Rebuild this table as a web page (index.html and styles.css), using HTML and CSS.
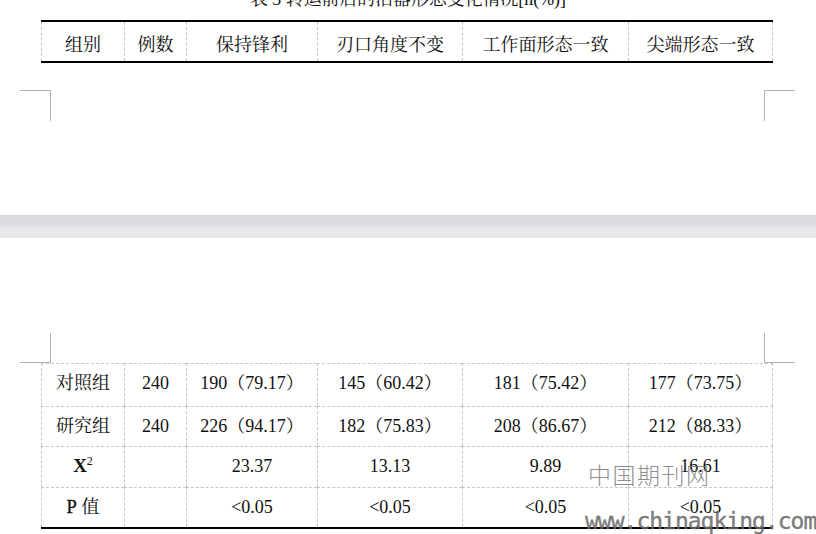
FILE: index.html
```html
<!DOCTYPE html>
<html lang="zh-CN">
<head>
<meta charset="utf-8">
<title>表 3</title>
<link rel="stylesheet" href="styles.css">
</head>
<body>
<main class="doc">
  <section class="sheet sheet-top">
    <p class="caption">表 3 转运前后的治器形态变化情况[n(%)]</p>
    <div class="grid grid-head">
      <div class="cell">组别</div>
      <div class="cell">例数</div>
      <div class="cell">保持锋利</div>
      <div class="cell">刃口角度不变</div>
      <div class="cell">工作面形态一致</div>
      <div class="cell">尖端形态一致</div>
    </div>
    <div class="marks marks-top">
      <span class="mark mark-tl"></span>
      <span class="mark mark-tr"></span>
    </div>
  </section>
  <div class="gutter"></div>
  <section class="sheet sheet-bottom">
    <div class="marks marks-bottom">
      <span class="mark mark-bl"></span>
      <span class="mark mark-br"></span>
    </div>
    <div class="grid grid-body">
      <div class="cell">对照组</div>
      <div class="cell">240</div>
      <div class="cell">190（79.17）</div>
      <div class="cell">145（60.42）</div>
      <div class="cell">181（75.42）</div>
      <div class="cell">177（73.75）</div>

      <div class="cell">研究组</div>
      <div class="cell">240</div>
      <div class="cell">226（94.17）</div>
      <div class="cell">182（75.83）</div>
      <div class="cell">208（86.67）</div>
      <div class="cell">212（88.33）</div>

      <div class="cell"><span class="chi">X<sup>2</sup></span></div>
      <div class="cell"></div>
      <div class="cell">23.37</div>
      <div class="cell">13.13</div>
      <div class="cell">9.89</div>
      <div class="cell">16.61</div>

      <div class="cell"><span class="pv">P</span>&nbsp;值</div>
      <div class="cell"></div>
      <div class="cell">&lt;0.05</div>
      <div class="cell">&lt;0.05</div>
      <div class="cell">&lt;0.05</div>
      <div class="cell">&lt;0.05</div>
    </div>
    <div class="watermark wm-cn">中国期刊网</div>
    <div class="watermark wm-url">www.chinaqking.com</div>
  </section>
</main>
</body>
</html>
```
FILE: styles.css
```css
* {
  box-sizing: border-box;
  margin: 0;
  padding: 0;
}

html, body {
  background: #ffffff;
}

body {
  width: 816px;
  height: 534px;
  overflow: hidden;
  font-family: "Liberation Serif", "Noto Serif CJK SC", "Noto Sans CJK SC", serif;
  color: #111111;
}

.sheet {
  display: flex;
  flex-direction: column;
  background: #ffffff;
}

.sheet-top {
  height: 215px;
}

.caption {
  margin-top: -9px;
  height: 16px;
  line-height: 16px;
  font-size: 17.9px;
  text-align: center;
  white-space: nowrap;
}

.grid {
  display: grid;
  grid-template-columns: 83px 62px 131px 145px 166px 145px;
  width: 732px;
  margin-left: 41px;
}

.cell {
  border-left: 1px dashed #c6c6c6;
  font-size: 18px;
  white-space: nowrap;
  text-align: center;
}

.cell:nth-child(6n) {
  border-right: 1px dashed #c6c6c6;
}

.grid-head {
  margin-top: 13px;
  border-top: 2px solid #000000;
  border-bottom: 2px solid #000000;
}

.grid-head .cell {
  display: flex;
  align-items: center;
  justify-content: center;
  height: 39px;
  padding-top: 2px;
}

.grid-body {
  grid-template-rows: 43px 40px 41px 40px;
  border-bottom: 2px solid #000000;
}

.grid-body .cell {
  display: block;
  border-top: 1px dashed #c6c6c6;
  line-height: 34px;
}

/* shared strut so Latin-only and mixed cells sit on one baseline */
.grid-body .cell::before {
  content: "\3000";
  display: inline-block;
  width: 0;
  font-family: "Noto Sans CJK SC", sans-serif;
}

.chi {
  font-weight: bold;
  font-size: 19px;
}

.chi sup {
  font-size: 12px;
  font-weight: normal;
  vertical-align: 7px;
  line-height: 0;
}

.pv {
  font-size: 18.5px;
  -webkit-text-stroke: 0.3px #111111;
}

.marks {
  display: flex;
  justify-content: space-between;
  padding: 0 21px 0 20px;
}

.marks-top {
  margin-top: 27px;
}

.marks-bottom {
  margin-top: 95px;
}

.mark {
  display: block;
  width: 31px;
  height: 31px;
  border: 0 solid #b4b4b4;
}

.mark-tl {
  border-top-width: 1px;
  border-right-width: 1px;
}

.mark-tr {
  border-top-width: 1px;
  border-left-width: 1px;
}

.mark-bl {
  height: 30px;
  border-right-width: 1px;
  border-bottom-width: 1px;
}

.mark-br {
  height: 30px;
  border-left-width: 1px;
  border-bottom-width: 1px;
}

.gutter {
  height: 23px;
  background: linear-gradient(to bottom, #d9dadd 0%, #dddee1 48%, #e6e7e9 52%, #e8e9eb 100%);
}

.sheet-bottom {
  position: relative;
  height: 296px;
}

.watermark {
  position: absolute;
  white-space: nowrap;
}

.wm-cn {
  left: 588px;
  top: 225px;
  font-family: "Noto Sans CJK SC", sans-serif;
  font-weight: 300;
  font-size: 23px;
  line-height: 23px;
  letter-spacing: 1.5px;
  color: rgba(120, 120, 120, 0.85);
}

.wm-url {
  left: 585px;
  top: 272px;
  font-family: "DejaVu Sans Mono", monospace;
  font-size: 23px;
  line-height: 23px;
  letter-spacing: -1px;
  color: rgba(105, 105, 105, 0.85);
  -webkit-text-stroke: 0.4px rgba(105, 105, 105, 0.85);
}
```
